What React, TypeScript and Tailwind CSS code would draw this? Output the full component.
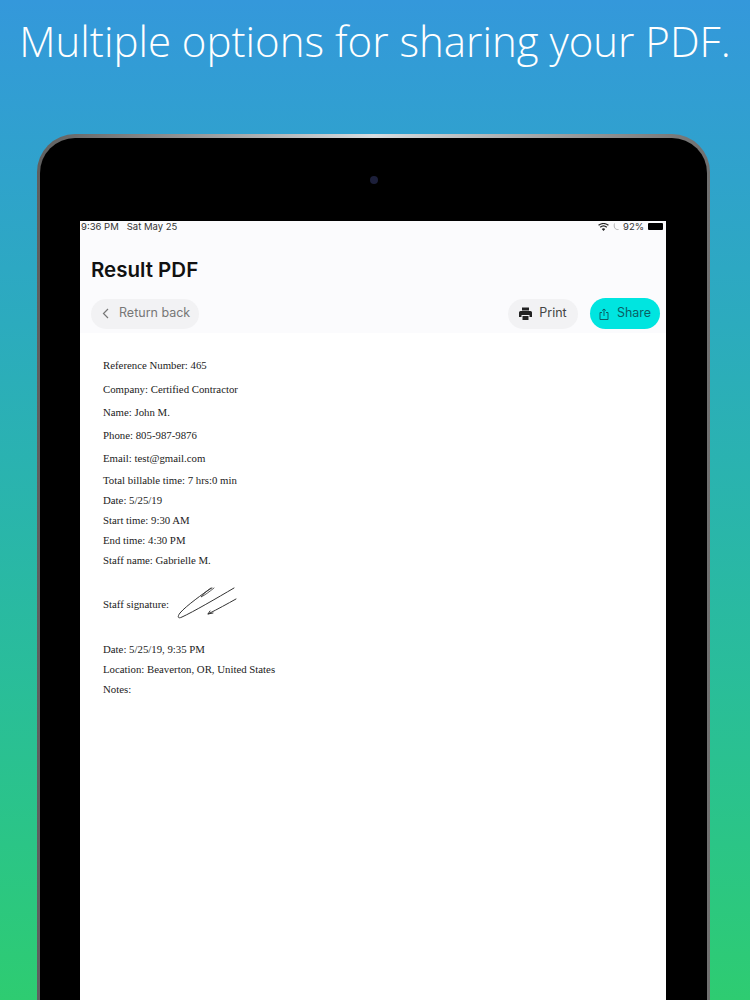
const docLines: { text: string; height: string }[] = [
  { text: "Reference Number: 465", height: "h-[24px]" },
  { text: "Company: Certified Contractor", height: "h-[23px]" },
  { text: "Name: John M.", height: "h-[23px]" },
  { text: "Phone: 805-987-9876", height: "h-[23px]" },
  { text: "Email: test@gmail.com", height: "h-[22px]" },
  { text: "Total billable time: 7 hrs:0 min", height: "h-[20px]" },
  { text: "Date: 5/25/19", height: "h-[20px]" },
  { text: "Start time: 9:30 AM", height: "h-[20px]" },
  { text: "End time: 4:30 PM", height: "h-[20px]" },
  { text: "Staff name: Gabrielle M.", height: "h-[20px]" },
];

const footerLines = ["Date: 5/25/19, 9:35 PM", "Location: Beaverton, OR, United States", "Notes:"];

function Signature() {
  return (
    <svg width="62" height="34" viewBox="0 0 62 34" fill="none" stroke="#333" strokeWidth="1" strokeLinecap="round">
      <path d="M34 2 C26 8 10 19 3 27 C0 31 1 33 5 31 C16 26 40 12 57 2" />
      <path d="M35 2 C31 4 27 7 24 11 C28 9 32 6 37 2" strokeWidth="0.8" />
      <path d="M59 13 C50 18 41 23 31 28 L33 25 M31 28 L36 27" />
    </svg>
  );
}

export default function App() {
  return (
    <div className="flex h-[1000px] w-[750px] flex-col overflow-hidden bg-gradient-to-b from-[#3498db] to-[#2ecc71] font-['Inter',sans-serif]">
      <h1 className="mt-[15px] h-[52px] text-center font-['Open_Sans',sans-serif] text-[42px] leading-[52px] font-light whitespace-nowrap text-white">
        Multiple options for sharing your PDF.
      </h1>

      {/* Tablet */}
      <div className="mt-[67px] ml-[37px] w-[673px] flex-1 rounded-t-[38px] bg-gradient-to-r from-[#5f5f5f] via-[#d8dde0] to-[#6f6f6f] px-[3px] pt-[4px]">
        <div className="flex h-full flex-col items-center rounded-t-[35px] bg-black">
          <div className="flex h-[83px] items-center pt-[1px]">
            <span className="size-[8px] rounded-full bg-[#1c1f3a]" />
          </div>

          <div className="ml-[-1px] flex w-[586px] flex-1 flex-col bg-white">
            <div className="h-[112px] bg-[#fbfbfd] px-[1px]">
              <div className="flex h-[11px] items-center justify-between pr-[2px] text-[9.5px] leading-[11px] text-[#333]">
                <span>9:36 PM&nbsp;&nbsp; Sat May 25</span>
                <div className="flex items-center gap-[4px]">
                  <svg width="11" height="8" viewBox="0 0 24 18" fill="#222">
                    <path d="M12 18l-4-4.6a6 6 0 0 1 8 0z" />
                    <path d="M5.6 10.8a9.6 9.6 0 0 1 12.8 0l2-2.3a12.8 12.8 0 0 0-16.8 0z" />
                    <path d="M1.7 6.3a15.6 15.6 0 0 1 20.6 0L24 4.2a18.6 18.6 0 0 0-24 0z" />
                  </svg>
                  <svg width="6" height="8" viewBox="0 0 6 8" fill="none" stroke="#aaa" strokeWidth="0.9">
                    <path d="M1.5 0.5 C0.5 4 2 7 5.5 6.5" />
                  </svg>
                  <span>92%</span>
                  <span className="h-[7px] w-[15px] rounded-[1px] bg-black" />
                </div>
              </div>

              <div className="mt-[25px] h-[26px] pl-[10px] text-[20.5px] leading-[26px] font-semibold text-[#111]">Result PDF</div>

              <div className="mt-[15px] flex items-center justify-between pr-[5px] pl-[10px] text-[12.5px]">
                <div className="flex h-[30px] w-[108px] items-center rounded-full bg-[#f2f2f4] pl-[11px] text-[#777]">
                  <svg width="7" height="11" viewBox="0 0 7 11" fill="none" stroke="#777" strokeWidth="1.2" className="mr-[10px]">
                    <path d="M6 1 L1.5 5.5 L6 10" />
                  </svg>
                  Return back
                </div>
                <div className="flex items-center gap-[12px]">
                  <div className="flex h-[30px] w-[70px] items-center justify-center gap-[7px] rounded-full bg-[#f2f2f4] text-[#444]">
                    <svg width="13" height="13" viewBox="0 0 13 13" fill="#222">
                      <path d="M3 0.5h7v3H3z" />
                      <path d="M1.5 4h10A1.5 1.5 0 0 1 13 5.5V10h-2.5V8h-8v2H0V5.5A1.5 1.5 0 0 1 1.5 4z" />
                      <path d="M3.5 9h6v4h-6z" />
                    </svg>
                    Print
                  </div>
                  <div className="flex h-[31px] w-[70px] items-center justify-center gap-[8px] rounded-full bg-[#00e5e0] text-[#0b5f66]">
                    <svg width="10" height="12" viewBox="0 0 10 12" fill="none" stroke="#0b5f66" strokeWidth="1">
                      <path d="M3 4.5H1v7h8v-7H7" />
                      <path d="M5 8V1M3.2 2.6 5 1l1.8 1.6" />
                    </svg>
                    Share
                  </div>
                </div>
              </div>
            </div>

            {/* PDF page */}
            <div className="pt-[22px] pl-[23px] font-['Liberation_Serif',serif] text-[10.8px] text-[#222]">
              {docLines.map((line) => (
                <div key={line.text} className={`${line.height} leading-[20px]`}>
                  {line.text}
                </div>
              ))}
              <div className="mt-[8px] flex h-[44px] items-center">
                <span className="mr-[8px] translate-y-[4px]">Staff signature:</span>
                <div className="translate-y-[3px]">
                  <Signature />
                </div>
              </div>
              <div className="mt-[17px]">
                {footerLines.map((line) => (
                  <div key={line} className="h-[20px] leading-[20px]">
                    {line}
                  </div>
                ))}
              </div>
            </div>
          </div>
        </div>
      </div>
    </div>
  );
}
